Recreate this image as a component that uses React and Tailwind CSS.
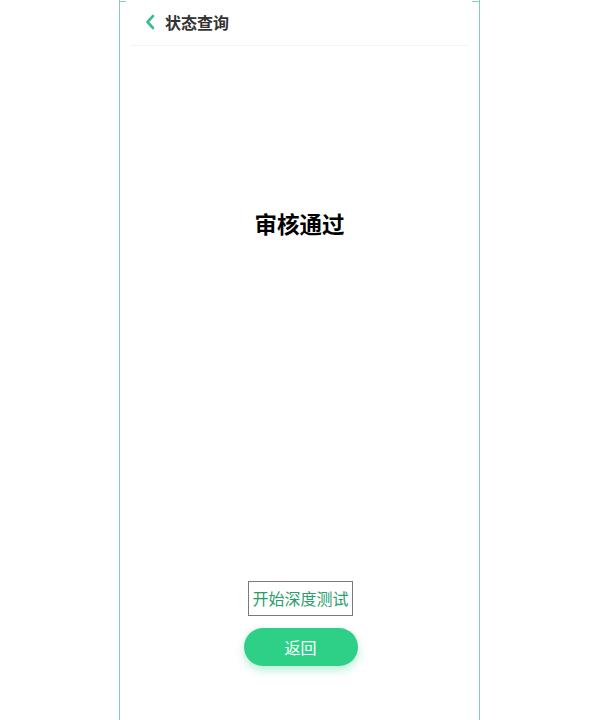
export default function App() {
  return (
    <div className="min-h-[720px] w-[601px] bg-white flex justify-center" style={{ fontFamily: '"Noto Sans CJK SC", "Noto Sans", sans-serif' }}>
      <div className="relative ml-[-2px] w-[361px] min-h-[720px] border-x border-[#86cdb4] flex flex-col">
        <div className="absolute left-[-1px] top-[1px] h-px w-[7px] bg-[#86cdb4]" />
        <div className="absolute right-[-1px] top-[1px] h-px w-[8px] bg-[#86cdb4]" />
        <div className="mx-[10px] h-[46px] border-b border-[#f3f3f3] flex items-center pl-[14px] pb-[2px]">
          <svg width="12" height="16" viewBox="0 0 12 16" className="mr-[9px]">
            <path d="M9 2 L3.5 8 L9 14" fill="none" stroke="#3dbd8c" strokeWidth="2.6" strokeLinecap="round" strokeLinejoin="round" />
          </svg>
          <span className="text-[16px] font-bold text-[#333] leading-none">状态查询</span>
        </div>
        <div className="pt-[166px] flex justify-center">
          <span className="text-[22.5px] font-bold text-black leading-none">审核通过</span>
        </div>
        <div className="mt-[346px] flex flex-col items-center">
          <div className="ml-[2px] h-[35px] px-[3px] border border-[#7a7a7a] flex items-center text-[16px] text-[#2a9d6c] leading-none">开始深度测试</div>
          <button className="mt-[12px] ml-[2px] w-[114px] h-[38px] rounded-full bg-[#2ecf87] text-white text-[16px] leading-none shadow-[0_4px_10px_rgba(46,207,135,0.35)]">返回</button>
        </div>
      </div>
    </div>
  );
}
